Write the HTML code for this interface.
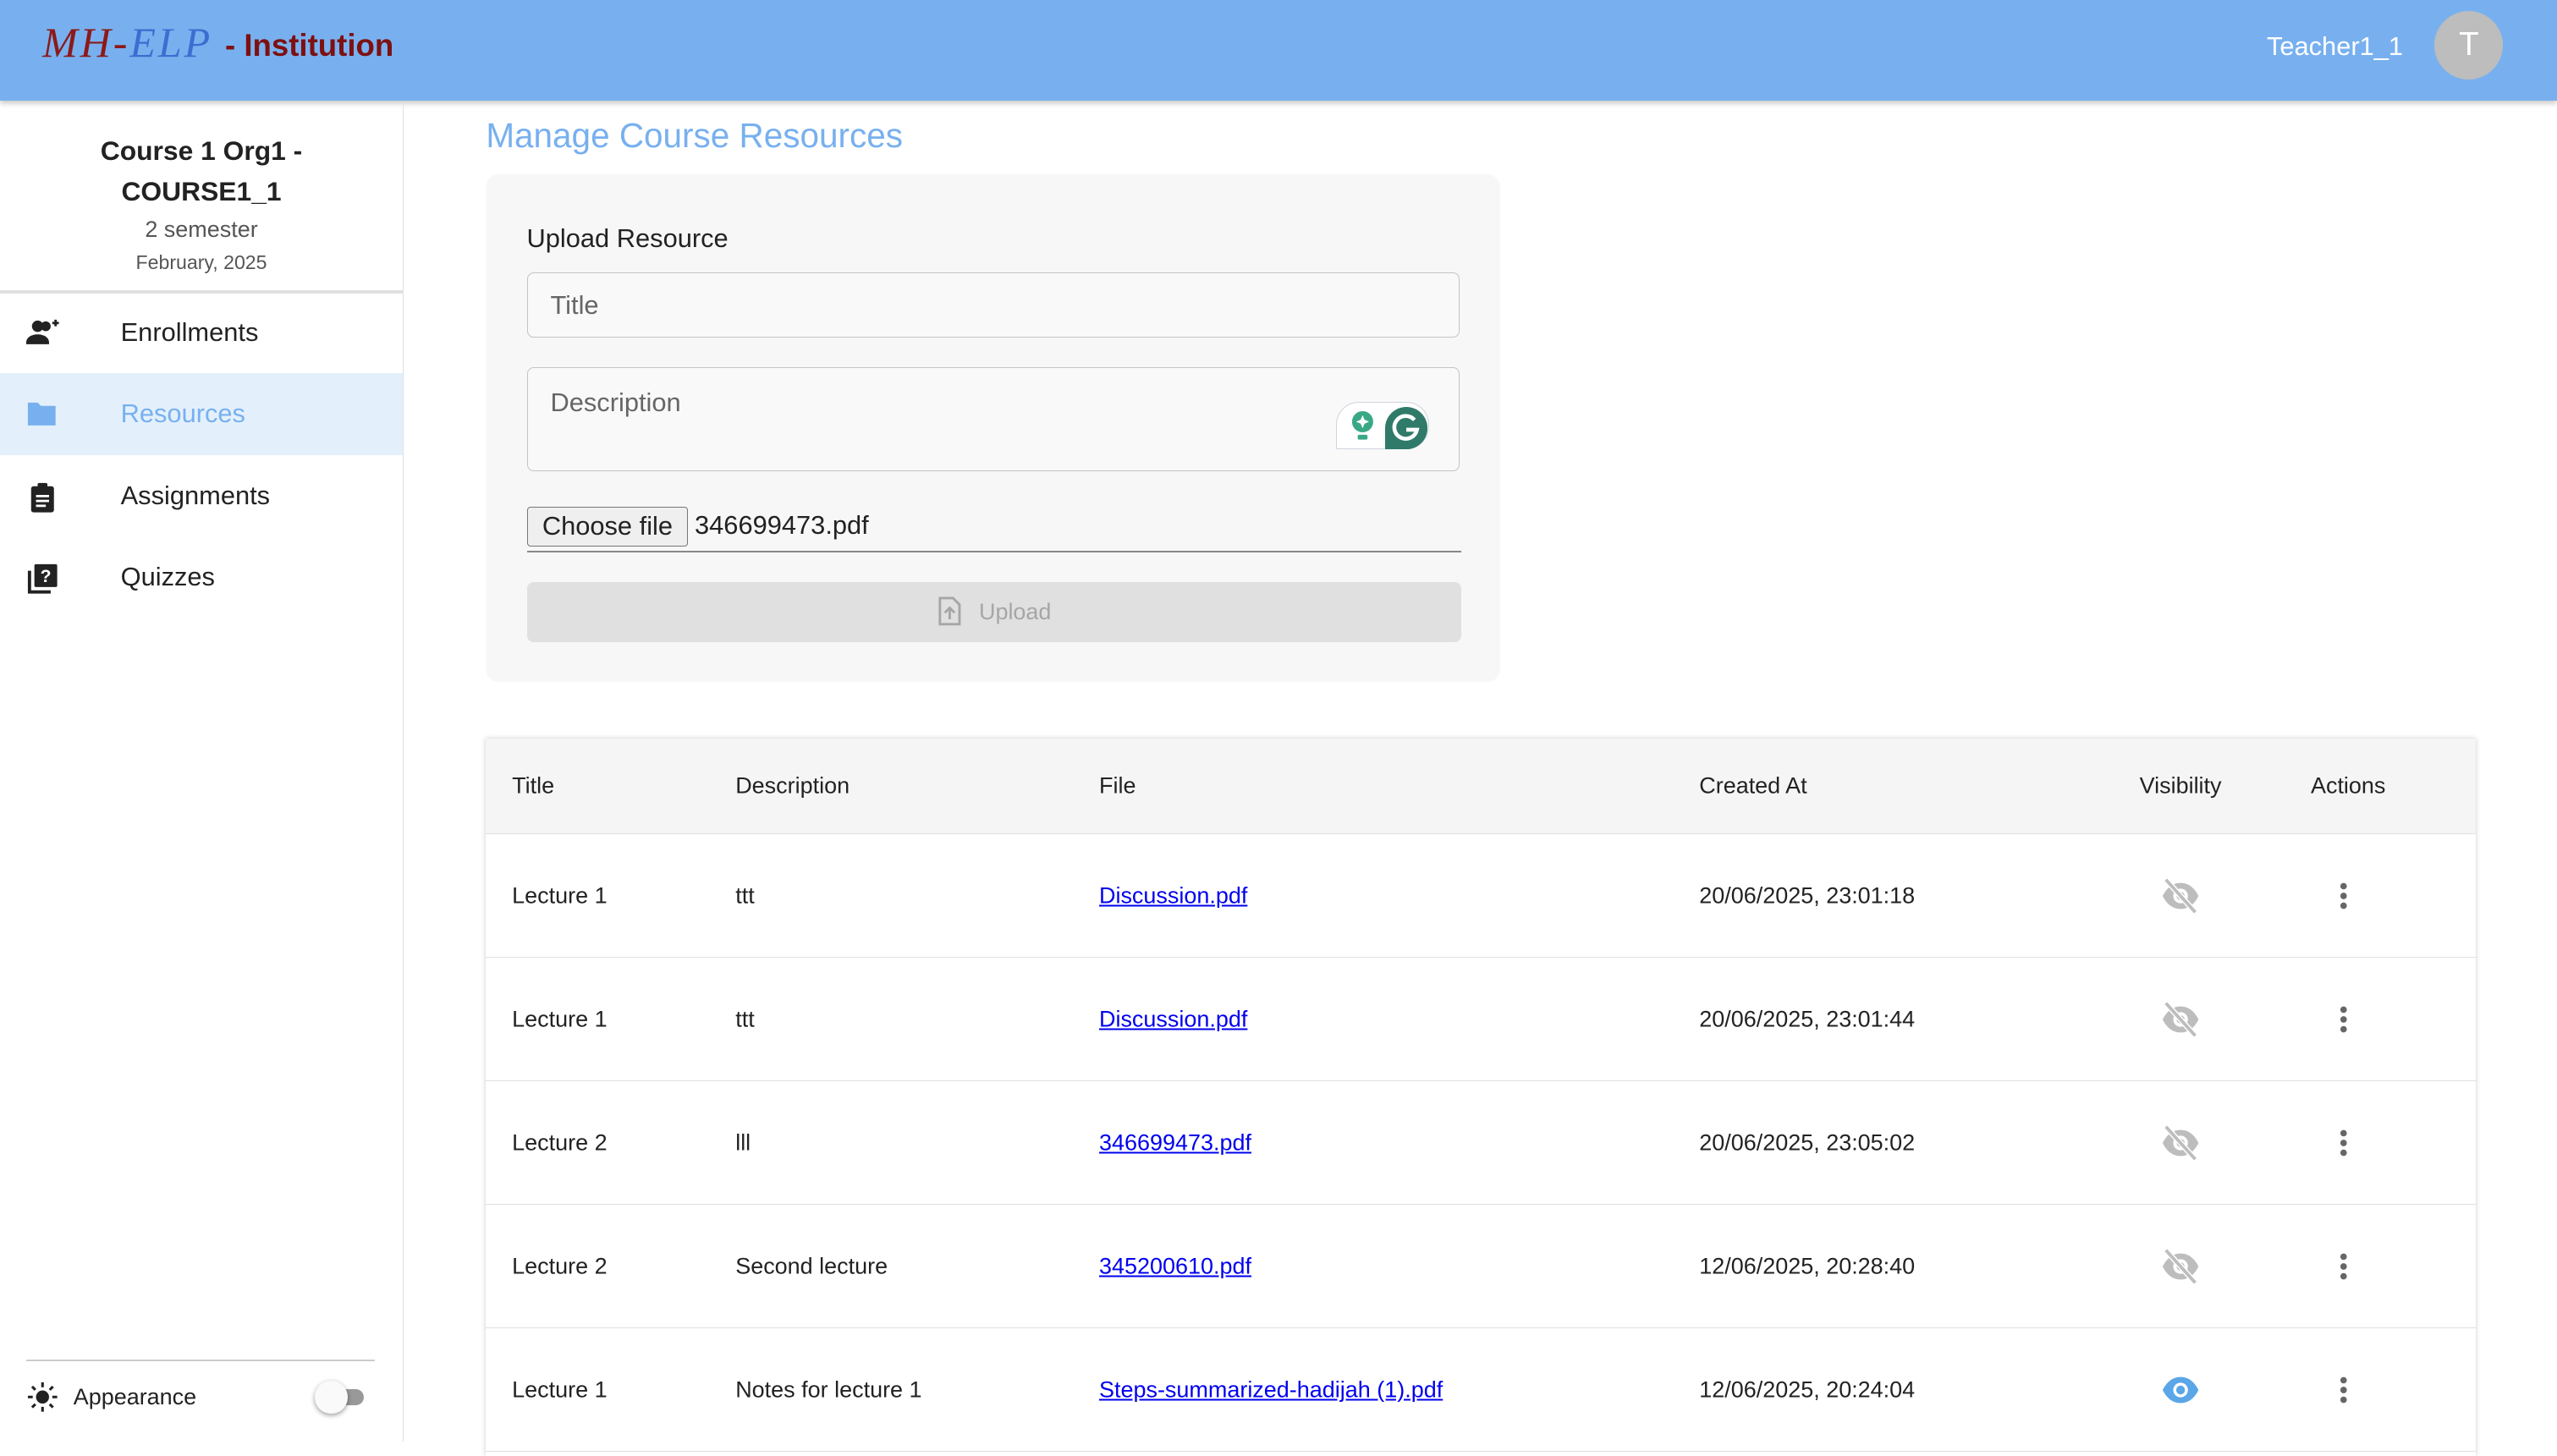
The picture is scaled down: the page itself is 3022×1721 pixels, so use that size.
<!DOCTYPE html>
<html><head><meta charset="utf-8"><style>
html{zoom:1.9273}
body{margin:0;width:1568px;height:884px;overflow:hidden;font-family:"Liberation Sans",Arial,sans-serif;color:#222;background:#fff;position:relative}
.abs{position:absolute}
.hdr{left:0;top:0;width:1568px;height:62px;background:#78b0ef;box-shadow:0 2px 3px rgba(0,0,0,.2)}
.side{left:0;top:62px;width:247px;height:822px;border-right:1px solid #e0e0e0}
.mi{position:absolute;left:0;width:247px;height:50px;line-height:50px;font-size:16px}
.mi span{position:absolute;left:74px}
.mi svg{position:absolute;left:16px;top:16px}
.card{left:298px;top:107px;width:622px;height:311px;background:#f7f7f7;border-radius:8px}
.inp{position:absolute;left:25px;width:571px;border:1px solid #c4c4c4;border-radius:4px;background:#f9f9f9;color:#666;font-size:16px}
.tbl{left:298px;top:453px;width:1220px;height:440px;box-shadow:0 0 3px rgba(0,0,0,.2);background:#fff}
.th{position:absolute;top:0;height:58px;width:1220px;background:#f5f5f5;border-bottom:1px solid #e0e0e0;font-size:14px}
.row{position:absolute;left:0;width:1220px;height:75px;border-bottom:1px solid #e0e0e0;font-size:14px}
.c{position:absolute;top:50%;transform:translateY(-50%);white-space:nowrap}
a{color:#0000ee;text-decoration:underline}
</style></head><body>
<div class="abs hdr">
 <div class="abs" style="left:26px;top:11px;font-family:'Liberation Serif',serif;font-style:italic;font-size:26px;letter-spacing:1.5px"><span style="color:#8b1a1a">MH-</span><span style="color:#3a6fd0">ELP</span></div>
 <div class="abs" style="left:138px;top:17px;font-size:19px;font-weight:bold;color:#7d1010">- Institution</div>
 <div class="abs" style="left:1390px;top:19px;font-size:16px;color:#fff">Teacher1_1</div>
 <div class="abs" style="left:1493px;top:7px;width:42px;height:42px;border-radius:50%;background:#bdbdbd;color:#fff;font-size:20px;text-align:center;line-height:42px">T</div>
</div>
<div class="abs side">
 <div class="abs" style="left:0;width:247px;top:18px;text-align:center;font-weight:bold;font-size:16.5px;line-height:25px">Course 1 Org1 -<br>COURSE1_1</div>
 <div class="abs" style="left:0;width:247px;top:71px;text-align:center;font-size:14px;color:#555">2 semester</div>
 <div class="abs" style="left:0;width:247px;top:92px;text-align:center;font-size:12px;color:#555">February, 2025</div>
 <div class="abs" style="left:0;top:116px;width:247px;height:2px;background:#e0e0e0"></div>
 <div class="mi" style="top:117px"><svg width="22" height="18" viewBox="0 0 22 18"><circle cx="7" cy="5" r="3.5" fill="#222"/><path d="M0 15c0-3 3-5 7-5s7 2 7 5v1H0z" fill="#222"/><circle cx="12" cy="5" r="3" fill="#222"/><path d="M16 3h4M18 1v4" stroke="#222" stroke-width="1.5"/></svg><span>Enrollments</span></div>
 <div class="mi" style="top:167px;background:#e3f0fc;color:#78b0ef"><svg width="20" height="18" viewBox="0 0 20 18"><path d="M1 2h6l2 2h9v12H1z" fill="#78b0ef"/></svg><span>Resources</span></div>
 <div class="mi" style="top:217px"><svg width="20" height="20" viewBox="0 0 20 20"><rect x="3" y="3" width="14" height="16" rx="1.5" fill="#222"/><rect x="7" y="1" width="6" height="4" rx="1" fill="#222"/><path d="M6 9h8M6 12h8M6 15h6" stroke="#fff" stroke-width="1.4"/></svg><span>Assignments</span></div>
 <div class="mi" style="top:267px"><svg width="20" height="20" viewBox="0 0 20 20"><path d="M2 5v13h13" stroke="#222" stroke-width="2" fill="none"/><rect x="5" y="1" width="14" height="14" rx="1" fill="#222"/><text x="12" y="12" font-size="11" font-weight="bold" fill="#fff" text-anchor="middle" font-family="Liberation Sans">?</text></svg><span>Quizzes</span></div>
 <div class="abs" style="left:16px;top:772px;width:214px;height:1px;background:#ccc"></div>
 <svg class="abs" style="left:16px;top:785px" width="20" height="20" viewBox="0 0 20 20"><circle cx="10" cy="10" r="4" fill="#222"/><g stroke="#222" stroke-width="1.6"><path d="M10 1v3M10 16v3M1 10h3M16 10h3M3.6 3.6l2 2M14.4 14.4l2 2M3.6 16.4l2-2M14.4 5.6l2-2"/></g></svg>
 <div class="abs" style="left:45px;top:787px;font-size:14px">Appearance</div>
 <div class="abs" style="left:197px;top:790px;width:26px;height:10px;border-radius:5px;background:#999"></div>
 <div class="abs" style="left:193px;top:785px;width:20px;height:20px;border-radius:50%;background:#fafafa;box-shadow:0 1px 3px rgba(0,0,0,.4)"></div>
</div>
<div class="abs" style="left:298px;top:71px;font-size:21px;color:#78b0ef">Manage Course Resources</div>
<div class="abs card">
 <div class="abs" style="left:25px;top:30px;font-size:16px">Upload Resource</div>
 <div class="inp" style="top:60px;height:39px;line-height:39px"><span style="margin-left:14px">Title</span></div>
 <div class="inp" style="top:118px;height:63px"><span style="position:absolute;left:14px;top:12px">Description</span>
  <div class="abs" style="left:496px;top:21px;width:56px;height:28px;border:1px solid #cfd3de;border-radius:14px 14px 14px 0;background:#fff"></div>
  <svg class="abs" style="left:504px;top:26px" width="16" height="20" viewBox="0 0 16 20"><circle cx="8" cy="7" r="6.5" fill="#3aa886"/><path d="M8 3l1.2 2.8L12 7l-2.8 1.2L8 11 6.8 8.2 4 7l2.8-1.2z" fill="#fff"/><rect x="5" y="15" width="6" height="3" rx="1" fill="#3aa886"/></svg>
  <svg class="abs" style="left:526px;top:24px" width="26" height="26" viewBox="0 0 26 26"><path d="M0 26V13A13 13 0 1 1 13 26z" fill="#2f7a68"/><path d="M18 8a7 7 0 1 0 1.5 6H13" stroke="#fff" stroke-width="2.4" fill="none"/></svg>
 </div>
 <div class="abs" style="left:25px;top:204px;width:98px;height:23px;border:1px solid #767676;border-radius:2px;background:#efefef;font-size:16px;text-align:center;line-height:23px">Choose file</div>
 <div class="abs" style="left:128px;top:206px;font-size:16px">346699473.pdf</div>
 <div class="abs" style="left:25px;top:231px;width:573px;height:1px;background:#888"></div>
 <div class="abs" style="left:25px;top:250px;width:573px;height:37px;background:#e0e0e0;border-radius:4px;color:#a6a6a6;font-size:14px;line-height:37px;text-align:center"><svg width="16" height="18" viewBox="0 0 16 18" style="vertical-align:-4px;margin-right:10px"><path d="M2 1h8l4 4v12H2z" fill="none" stroke="#a6a6a6" stroke-width="1.5"/><path d="M8 14V8M5 10l3-3 3 3" stroke="#a6a6a6" stroke-width="1.5" fill="none"/></svg>Upload</div>
</div>
<div class="abs tbl">
 <div class="th"><span class="c" style="left:16px">Title</span><span class="c" style="left:153px">Description</span><span class="c" style="left:376px">File</span><span class="c" style="left:744px">Created At</span><span class="c" style="left:1014px">Visibility</span><span class="c" style="left:1119px">Actions</span></div>
 <div id="rows"></div>
</div>
<script>
var d=[["Lecture 1","ttt","Discussion.pdf","20/06/2025, 23:01:18",0],["Lecture 1","ttt","Discussion.pdf","20/06/2025, 23:01:44",0],["Lecture 2","lll","346699473.pdf","20/06/2025, 23:05:02",0],["Lecture 2","Second lecture","345200610.pdf","12/06/2025, 20:28:40",0],["Lecture 1","Notes for lecture 1","Steps-summarized-hadijah (1).pdf","12/06/2025, 20:24:04",1]];
var off='<svg width="24" height="22" viewBox="0 0 24 22"><path d="M1 11C4 5 8 3 12 3s8 2 11 8c-3 6-7 8-11 8S4 17 1 11z" fill="#bdbdbd"/><circle cx="12" cy="11" r="4.5" fill="#fff"/><circle cx="12" cy="11" r="2.5" fill="#bdbdbd"/><path d="M3 1l18 20" stroke="#fff" stroke-width="3.5"/><path d="M3 1l18 20" stroke="#bdbdbd" stroke-width="2"/></svg>';
var on='<svg width="24" height="18" viewBox="0 0 24 18"><path d="M1 9C4 3 8 1 12 1s8 2 11 8c-3 6-7 8-11 8S4 15 1 9z" fill="#5aa6e8"/><circle cx="12" cy="9" r="4.5" fill="#fff"/><circle cx="12" cy="9" r="2.7" fill="#5aa6e8"/></svg>';
var dots='<svg width="6" height="18" viewBox="0 0 6 18"><circle cx="3" cy="3" r="2" fill="#666"/><circle cx="3" cy="9" r="2" fill="#666"/><circle cx="3" cy="15" r="2" fill="#666"/></svg>';
var h='';d.forEach(function(r,i){h+='<div class="row" style="top:'+(59+i*75.75)+'px"><span class="c" style="left:16px">'+r[0]+'</span><span class="c" style="left:153px">'+r[1]+'</span><span class="c" style="left:376px"><a>'+r[2]+'</a></span><span class="c" style="left:744px">'+r[3]+'</span><span class="c" style="left:1027px;line-height:0">'+(r[4]?on:off)+'</span><span class="c" style="left:1136px;line-height:0">'+dots+'</span></div>'});
document.getElementById('rows').innerHTML=h;
</script>
</body></html>
